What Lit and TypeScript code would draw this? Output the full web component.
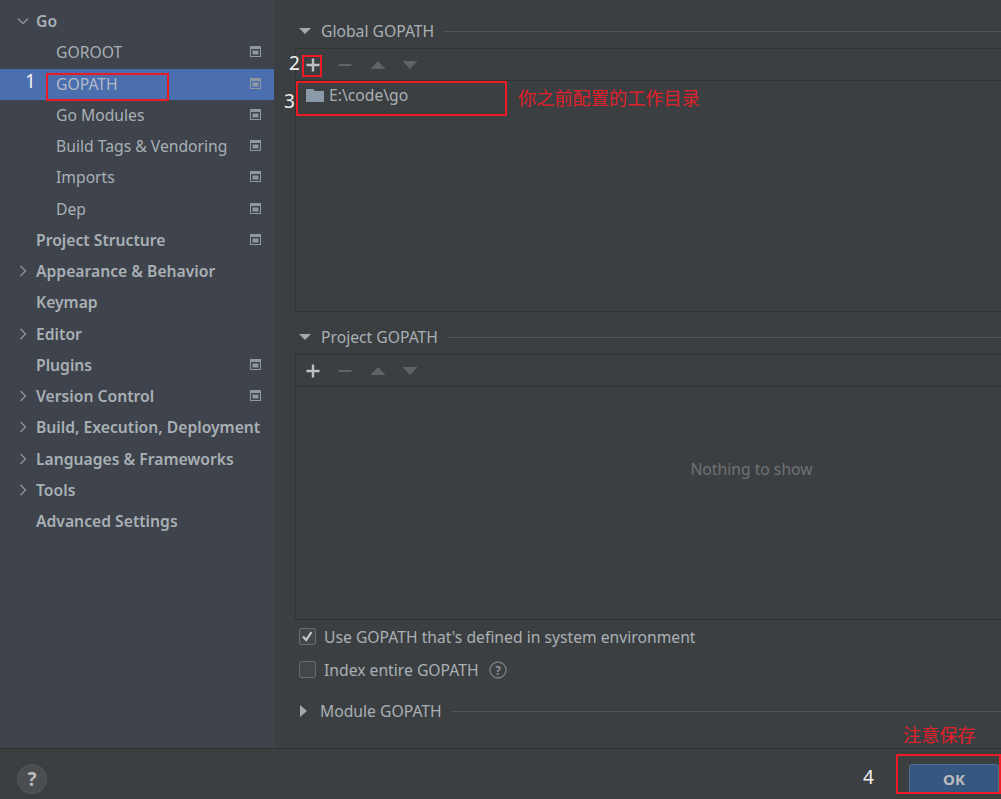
import { LitElement, css, html, nothing, svg } from "lit";
import { customElement } from "lit/decorators.js";

type NavItem = { label: string; bold?: boolean; indent?: boolean; arrow?: "down" | "right"; box?: boolean; selected?: boolean };

const NAV: NavItem[] = [
  { label: "Go", bold: true, arrow: "down" },
  { label: "GOROOT", indent: true, box: true },
  { label: "GOPATH", indent: true, box: true, selected: true },
  { label: "Go Modules", indent: true, box: true },
  { label: "Build Tags & Vendoring", indent: true, box: true },
  { label: "Imports", indent: true, box: true },
  { label: "Dep", indent: true, box: true },
  { label: "Project Structure", bold: true, box: true },
  { label: "Appearance & Behavior", bold: true, arrow: "right" },
  { label: "Keymap", bold: true },
  { label: "Editor", bold: true, arrow: "right" },
  { label: "Plugins", bold: true, box: true },
  { label: "Version Control", bold: true, arrow: "right", box: true },
  { label: "Build, Execution, Deployment", bold: true, arrow: "right" },
  { label: "Languages & Frameworks", bold: true, arrow: "right" },
  { label: "Tools", bold: true, arrow: "right" },
  { label: "Advanced Settings", bold: true },
];

const boxIcon = html`<svg class="box" width="11" height="11" viewBox="0 0 11 11">
  <path fill="#8f989e" fill-rule="evenodd" d="M0 0h11v11H0zM1 3v7h9V3z" />
  <rect x="2.5" y="4.5" width="6" height="4" fill="#8f989e" />
</svg>`;

const toolbar = html`<div class="toolbar">
  <svg height="14" viewBox="0 0 14 14"><path fill="#bcbfc1" d="M5.8 .5h2.4v5.3h5.3v2.4H8.200v5.300H5.800V8.200H.5V5.800h5.300z" /></svg>
  <svg height="14" viewBox="0 0 14 14"><rect x=".5" y="6" width="13" height="2" fill="#606364" /></svg>
  <svg height="14" viewBox="0 0 16 14"><path fill="#606364" d="M8 3l7.500 8H.5z" /></svg>
  <svg height="14" viewBox="0 0 16 14"><path fill="#606364" d="M.5 3h15L8 11z" /></svg>
</div>`;

@customElement("app-root")
export class AppRoot extends LitElement {
  static styles = css`
    :host {
      display: block;
      position: relative;
      width: 1001px;
      height: 799px;
      overflow: hidden;
      background: #3c3f41;
      color: #a9b0b5;
      font: 15.7px/20px "Noto Sans", "Noto Sans CJK SC", sans-serif;
    }
    .top {
      display: flex;
      height: 748px;
    }
    .side {
      width: 274px;
      flex: none;
      box-sizing: border-box;
      padding-top: 6px;
      background: #3e434c;
    }
    .row {
      display: flex;
      align-items: center;
      height: 31.25px;
      padding: 0 13px 1px 36px;
      position: relative;
      box-sizing: border-box;
    }
    .row.indent {
      padding-left: 56px;
    }
    .row.bold {
      font-weight: 600;
    }
    .row.selected {
      background: #4b6eaf;
      color: #b4bcc8;
    }
    .row .box {
      margin-left: auto;
      margin-bottom: 1px;
    }
    .arrow {
      position: absolute;
      left: 17px;
      top: 9px;
    }
    .main {
      flex: 1;
      min-width: 0;
      padding: 14px 0 0 21px;
      display: flex;
      flex-direction: column;
    }
    .head {
      display: flex;
      align-items: center;
      gap: 10px;
      height: 34px;
      flex: none;
    }
    .head.spaced {
      margin-top: 8px;
    }
    .head.module {
      margin-top: 8px;
      margin-left: -1px;
    }
    .head .label {
      white-space: nowrap;
    }
    .head .rule {
      flex: 1;
      height: 1px;
      background: #515456;
    }
    .tri {
      flex: none;
      width: 12px;
      margin-left: 4px;
    }
    .panel {
      width: 912px;
      border: 1px solid #323232;
      border-right: none;
      box-sizing: border-box;
      display: flex;
      flex-direction: column;
      flex: none;
    }
    .panel.global {
      height: 264px;
    }
    .panel.project {
      height: 266px;
    }
    .toolbar {
      display: flex;
      align-items: center;
      height: 31px;
      padding-left: 1px;
      border-bottom: 1px solid #323232;
      flex: none;
    }
    .toolbar svg {
      width: 32px;
      flex: none;
    }
    .toolbar svg:nth-child(3) {
      margin-left: 1px;
    }
    .entry {
      display: flex;
      align-items: center;
      gap: 5px;
      height: 28px;
      padding-left: 10px;
    }
    .empty {
      flex: 1;
      display: flex;
      align-items: center;
      justify-content: center;
      color: #6e7274;
      padding-bottom: 68px;
    }
    .check {
      display: flex;
      align-items: center;
      gap: 8px;
      height: 33px;
      padding-left: 4px;
      flex: none;
    }
    .cb {
      width: 15px;
      height: 15px;
      border: 1px solid #6b6b6b;
      border-radius: 2px;
      background: #43474a;
      flex: none;
      display: flex;
    }
    .hint {
      margin-left: 2px;
    }
    .foot {
      height: 51px;
      border-top: 1px solid #323232;
      display: flex;
      align-items: center;
      justify-content: space-between;
      padding: 0 2px 0 17px;
    }
    .help {
      width: 30px;
      height: 30px;
      border-radius: 50%;
      background: #4b4e50;
      border: 1px solid #565a5c;
      box-sizing: border-box;
      color: #bbbbbb;
      font-size: 19px;
      font-weight: 700;
      display: flex;
      align-items: center;
      justify-content: center;
      margin-top: 9px;
    }
    .ok {
      width: 90px;
      height: 30px;
      box-sizing: border-box;
      margin-top: 9px;
      background: #365880;
      border: 1px solid #4c708c;
      border-radius: 3px;
      color: #bbbbbb;
      font-size: 15px;
      font-weight: 700;
      display: flex;
      align-items: center;
      justify-content: center;
    }
    .mark {
      position: absolute;
      border: 2px solid #ed1c24;
      box-sizing: border-box;
    }
    .num {
      position: absolute;
      color: #f0f0f0;
      font-size: 19px;
      line-height: 22px;
    }
    .note {
      position: absolute;
      color: #e0202a;
      font-size: 18.2px;
      line-height: 24px;
      white-space: nowrap;
    }
  `;

  renderHead(label: string, open: boolean, cls = "") {
    return html`<div class="head ${cls}">
      <svg class="tri" width="12" height="12" viewBox="0 0 12 12">
        ${open
          ? svg`<path fill="#a6a9ab" d="M0 3h12L6 9z" />`
          : svg`<path fill="#a6a9ab" d="M2 0l7 6-7 6z" />`}
      </svg>
      <span class="label">${label}</span>
      <span class="rule"></span>
    </div>`;
  }

  render() {
    return html`
      <div class="top">
        <nav class="side">
          ${NAV.map(
            (n) => html`<div class="row ${n.indent ? "indent" : ""} ${n.bold ? "bold" : ""} ${n.selected ? "selected" : ""}">
              ${n.arrow
                ? html`<svg class="arrow" width="12" height="12" viewBox="0 0 12 12">
                    <path
                      fill="none"
                      stroke="#8f9599"
                      stroke-width="1.3"
                      d=${n.arrow === "down" ? "M1 3.500l5 5 5-5" : "M3.500 1l5 5-5 5"}
                    />
                  </svg>`
                : nothing}
              <span>${n.label}</span>
              ${n.box ? boxIcon : nothing}
            </div>`
          )}
        </nav>
        <section class="main">
          ${this.renderHead("Global GOPATH", true)}
          <div class="panel global">
            ${toolbar}
            <div class="entry">
              <svg width="18" height="15" viewBox="0 0 18 15">
                <path fill="#8a9aa8" d="M0 1h7l2 2h9v11H0z" />
              </svg>
              <span>E:\\code\\go</span>
            </div>
          </div>
          ${this.renderHead("Project GOPATH", true, "spaced")}
          <div class="panel project">
            ${toolbar}
            <div class="empty">Nothing to show</div>
          </div>
          <div class="check">
            <span class="cb">
              <svg width="15" height="15" viewBox="0 0 15 15">
                <path fill="none" stroke="#c5c8ca" stroke-width="2.2" d="M3 7.500l3.200 3.500 5.300-8" />
              </svg>
            </span>
            <span>Use GOPATH that's defined in system environment</span>
          </div>
          <div class="check">
            <span class="cb"></span>
            <span>Index entire GOPATH</span>
            <svg class="hint" width="18" height="18" viewBox="0 0 18 18">
              <circle cx="9" cy="9" r="8" fill="none" stroke="#7c8083" stroke-width="1.3" />
              <text x="9" y="13.500" text-anchor="middle" fill="#8f9396" font-size="12" font-weight="700" font-family="Noto Sans">?</text>
            </svg>
          </div>
          ${this.renderHead("Module GOPATH", false, "module")}
        </section>
      </div>
      <footer class="foot">
        <div class="help">?</div>
        <div class="ok">OK</div>
      </footer>

      <div class="mark" style="left:46px;top:73px;width:123px;height:28px"></div>
      <div class="mark" style="left:302px;top:55px;width:20px;height:22px"></div>
      <div class="mark" style="left:296px;top:81px;width:211px;height:35px"></div>
      <div class="mark" style="left:896px;top:754px;width:105px;height:40px"></div>
      <span class="num" style="left:25px;top:70px">1</span>
      <span class="num" style="left:289px;top:52px">2</span>
      <span class="num" style="left:284px;top:90px">3</span>
      <span class="num" style="left:863px;top:766px">4</span>
      <span class="note" style="left:518px;top:86px">你之前配置的工作目录</span>
      <span class="note" style="left:903px;top:723px">注意保存</span>
    `;
  }
}
